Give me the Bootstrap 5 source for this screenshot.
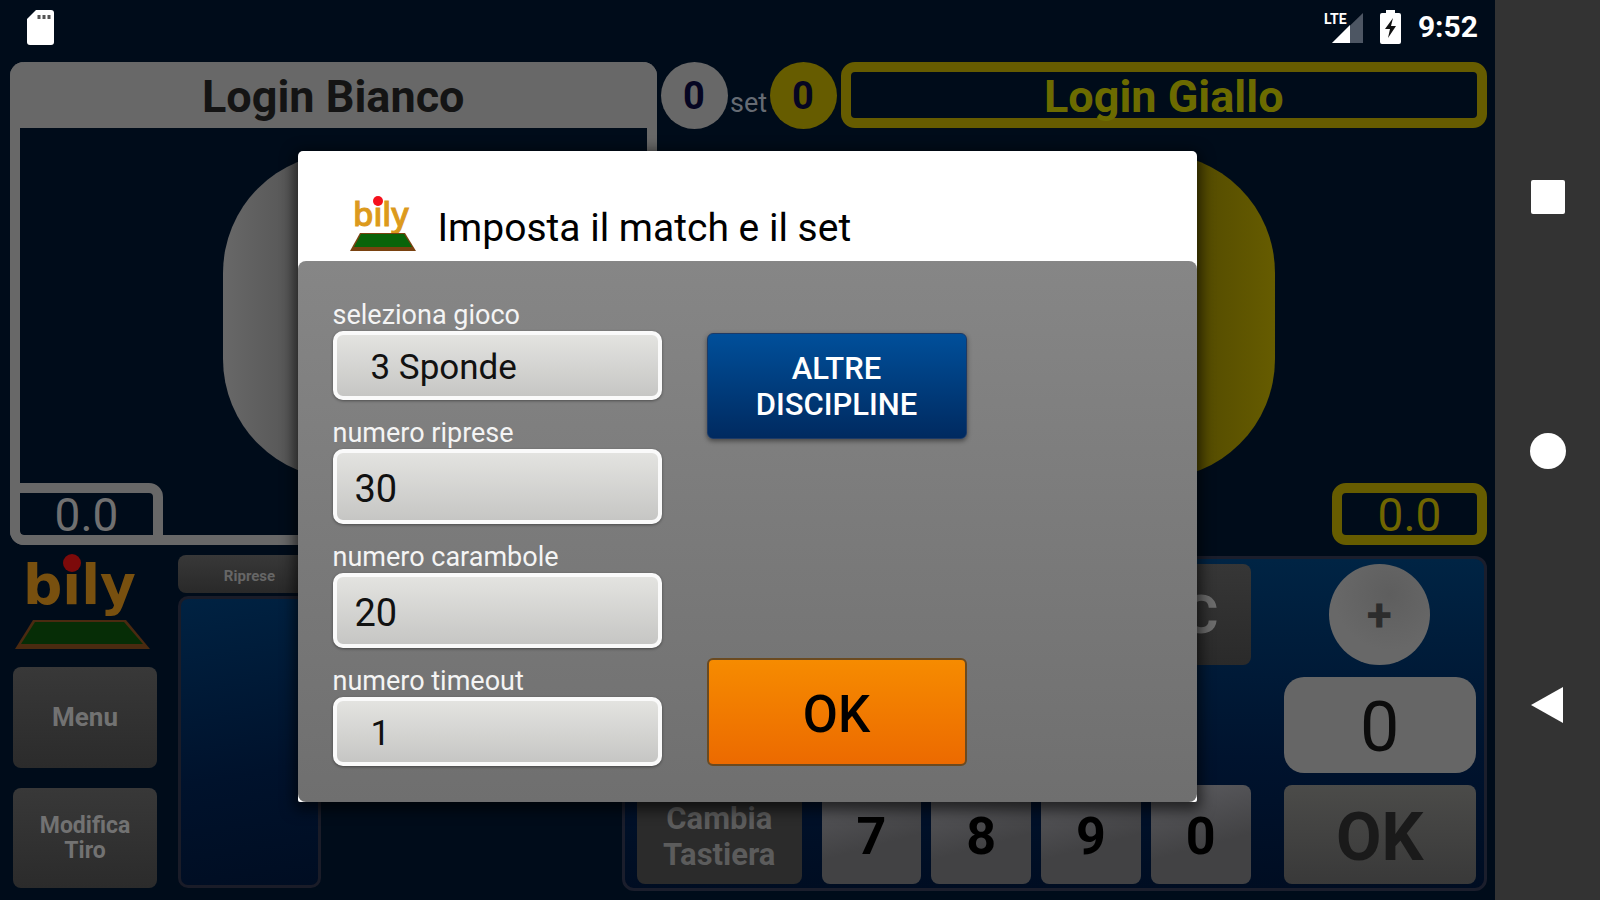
<!DOCTYPE html>
<html lang="it">
<head>
<meta charset="utf-8">
<meta name="viewport" content="width=device-width, initial-scale=1">
<title>Bily</title>
<link href="https://cdn.jsdelivr.net/npm/bootstrap@5.3.0/dist/css/bootstrap.min.css" rel="stylesheet">
<style>
  :root { --ash: #686868; --gold: #665c00; --night: #000c1a; }
  body { font-family: Roboto, "Liberation Sans", sans-serif; background: var(--night); color: #000; line-height: 1.2; }
  .sysnav { width: 105px; background: #333; }
  .sysnav button { background: none; border: 0; padding: 0; }
  .keys { gap: 217px; padding-top: 2px; }
  .statusbar { height: 62px; padding: 0 17px 8px 26px; }
  .clock { font-size: 30px; font-weight: 700; color: #fff; }

  .scores { flex: 482 1 0; display: grid; grid-template-columns: minmax(0, 1fr) 176px minmax(0, 1fr); column-gap: 4px; padding: 0 8px 0 10px; }
  .side-white { border: 10px solid var(--ash); border-width: 0 10px 10px; border-radius: 14px; }
  .login { height: 66px; font-size: 45px; font-weight: 700; padding: 3px 0 0; line-height: 1; }
  .login-white { margin: 0 -10px; border: 0; background: var(--ash); color: #141414; border-radius: 14px 14px 0 0; }
  .login-gold { background: transparent; color: #6c6b00; border: 10px solid var(--gold); border-radius: 14px; }
  .stage { min-height: 0; }
  .blob { width: 300px; height: 326px; margin-top: 25px; border-radius: 120px; }
  .blob-white { margin-left: 203px; background: linear-gradient(90deg, #686868, #4a4a4a 40%); }
  .blob-gold { margin-right: 212px; background: linear-gradient(270deg, #665c00, #4a4200 40%); }
  .avg { height: 62px; padding-top: 2px; font-size: 46px; line-height: 1; border-radius: 14px; }
  .avg-white { width: 153px; margin: 0 0 -10px -10px; border: 10px solid var(--ash); border-radius: 0 14px 0 14px; color: #707070; }
  .avg-gold { width: 155px; border: 10px solid var(--gold); color: #706600; }
  .setbar { height: 67px; }
  .disc { width: 67px; height: 67px; padding-top: 2px; font-size: 38px; font-weight: 700; color: #050522; }
  .disc-ash { background: var(--ash); }
  .disc-gold { background: var(--gold); }
  .set-word { font-size: 27px; color: #666b73; padding-top: 16px; }

  .lower { flex: 357 1 0; display: grid; grid-template-columns: 144px 164px 301fr 865fr; padding: 0 8px 9px 13px; }
  .tools { gap: 20px; padding: 9px 0 3px; }
  .tool { flex: 1 1 0; border: 0; border-radius: 8px; background: linear-gradient(#383838, #2b2b2b); color: #727272; font-weight: 700; }
  .tool-a { font-size: 26px; }
  .tool-b { font-size: 23px; line-height: 25px; }
  .rounds { margin-left: 21px; padding: 10px 0 3px; gap: 3px; }
  .rounds-head { height: 38px; padding-top: 4px; border-radius: 8px; background: linear-gradient(#383838, #292929); color: #666; font-size: 15px; font-weight: 700; }
  .rounds-body { border: 3px solid #1a1c28; border-radius: 10px; background: linear-gradient(170deg, #002242, #00122c 60%, #000d22); }
  .pad { grid-column: 4; margin-top: 11px; border: 3px solid #1b1e2c; border-radius: 12px; padding: 5px 8px 4px 12px;
         background: linear-gradient(#002444, #00132e 60%, #000d22);
         display: grid; gap: 12px 10px; grid-template-rows: 100fr 95fr 98fr; grid-template-columns: 175fr 100fr 100fr 100fr 100fr 216fr; }
  .pad button { border: 0; padding: 0; border-radius: 8px; font-weight: 700; line-height: 1; }
  .pad .key { padding-top: 4px; background: linear-gradient(165deg, #5c5c60, #424244 60%); font-size: 52px; color: #000; }
  .pad .key-c { grid-column: 5; background: linear-gradient(#363636, #2a2a2a); color: #6c6c6c; font-size: 54px; }
  .pad .key-swap { margin-right: 10px; padding-top: 4px; background: #2b2b2b; color: #5c5c5c; font-size: 31px; line-height: 36px; }
  .pad .key-plus { grid-column: 6; justify-self: center; margin-left: 22px; height: 100%; aspect-ratio: 1; border-radius: 50%; background: radial-gradient(circle at 60% 30%, #5e5e5e, #686868 60%); color: #2c2c2c; font-size: 46px; }
  .counter { grid-column: 6; margin-left: 23px; background: #666; border-radius: 20px; font-size: 70px; line-height: 1; color: #0c0c0c; padding-top: 4px; }
  .pad .key-ok { grid-column: 6; margin-left: 23px; padding-top: 6px; background: linear-gradient(#4b4b49, #393939); color: #1a1a1a; font-size: 66px; }

  .veil { inset: 0; padding-top: 52px; }
  .dialog { width: 60.2%; min-width: 700px; background: #fff; border-radius: 5px 5px 2px 2px; box-shadow: 0 4px 14px 4px #0009; }
  .dialog-top { height: 110px; padding: 0 52px 10px; gap: 22px; }
  .dialog-top svg { overflow: visible; }
  .dialog-top h1 { font-size: 39px; font-weight: 400; line-height: 46px; margin: 0; }
  .dialog form { border-radius: 8px; background: linear-gradient(#868686, #6f6f6f); padding: 37px 35px 36px; gap: 45px; }
  .fields { flex: 0 0 329px; gap: 16px; }
  .fields label { display: block; padding-top: 2px; color: #f4f4f4; font-size: 27px; line-height: 31px; }
  .box { display: block; width: 100%; border: 4px solid #fafafa; border-radius: 10px; background: linear-gradient(#e3e3e0, #c6c6c4); color: #111; box-shadow: 0 1px 3px #0006; appearance: none; outline: 0; }
  input.box { height: 75px; font-size: 38px; padding: 6px 18px 0; }
  select.box { height: 69px; font-size: 35px; padding: 6px 34px 0; }
  .actions { flex: 0 0 260px; padding-top: 35px; }
  .actions button { border-radius: 6px; font-weight: 500; }
  .act-blue { height: 106px; padding-top: 4px; color: #fff; font-size: 31px; line-height: 36px; background: linear-gradient(#004f9a, #002a60); border: 1px solid #1d3a66; box-shadow: 0 2px 5px #0007; }
  .act-orange { height: 108px; padding-top: 6px; font-size: 51px; line-height: 1; background: linear-gradient(#f68b00, #ec6a00); border: 2px solid #6b4a20; }
</style>
</head>
<body>
<div class="d-flex min-vh-100">
  <main class="position-relative flex-grow-1 d-flex flex-column">
    <header class="statusbar d-flex align-items-center">
      <svg width="28" height="35" viewBox="0 0 28 35"><path d="M10 0H25Q28 0 28 3V32Q28 35 25 35H4Q1 35 1 32V9Z" fill="#fff"/><path d="M13 5v4M18 5v4M23 5v4" stroke="#555" stroke-width="3"/></svg>
      <div class="ms-auto d-flex align-items-center">
        <svg width="40" height="34" viewBox="0 0 40 34"><path d="M39 3V33H8Z" fill="#4d5663"/><path d="M26 15V33H8Z" fill="#fff"/><text x="0" y="14" font-family="Roboto" font-size="14" font-weight="700" fill="#fff">LTE</text></svg>
        <svg class="mx-3" width="22" height="34" viewBox="0 0 22 34"><path d="M6 3V0H15V3H19Q21 3 21 5V32Q21 34 19 34H2Q0 34 0 32V5Q0 3 2 3Z" fill="#fff"/><path d="M13 8L5 19H10L8 28L16 16H11Z" fill="#111"/></svg>
        <span class="clock">9:52</span>
      </div>
    </header>

    <section class="scores">
      <div class="side-white d-flex flex-column">
        <button class="login login-white">Login Bianco</button>
        <div class="stage flex-grow-1"><div class="blob blob-white d-inline-block"></div></div>
        <div class="avg avg-white d-flex justify-content-center align-items-center">0.0</div>
      </div>
      <div class="setbar d-flex justify-content-between">
        <div class="disc disc-ash rounded-circle d-flex justify-content-center align-items-center">0</div>
        <span class="set-word align-self-center">set</span>
        <div class="disc disc-gold rounded-circle d-flex justify-content-center align-items-center">0</div>
      </div>
      <div class="d-flex flex-column align-items-end">
        <button class="login login-gold w-100 d-flex justify-content-center align-items-center">Login Giallo</button>
        <div class="stage flex-grow-1"><div class="blob blob-gold d-inline-block"></div></div>
        <div class="avg avg-gold d-flex justify-content-center align-items-center">0.0</div>
      </div>
    </section>

    <section class="lower">
      <div class="d-flex flex-column">
        <svg width="140" height="113" viewBox="0 0 140 113" aria-label="bily">
          <text x="10" y="59" font-family="DejaVu Sans" font-weight="700" font-size="55" fill="#78500f">bily</text>
          <circle cx="59" cy="18" r="9" fill="#7d0a0a"/>
          <path d="M20 75H113L137 104H2Z" fill="#4a2a10"/><path d="M22 77H111L130 99H8Z" fill="#062d06"/>
        </svg>
        <div class="tools flex-grow-1 d-flex flex-column">
          <button class="tool tool-a">Menu</button>
          <button class="tool tool-b">Modifica<br>Tiro</button>
        </div>
      </div>
      <div class="rounds d-flex flex-column">
        <div class="rounds-head d-flex justify-content-center align-items-center">Riprese</div>
        <div class="rounds-body flex-grow-1"></div>
      </div>
      <div class="pad">
        <button class="key-c">C</button>
        <button class="key-plus">+</button>
        <div class="counter d-flex justify-content-center align-items-center">0</div>
        <button class="key-swap">Cambia<br>Tastiera</button>
        <button class="key">7</button>
        <button class="key">8</button>
        <button class="key">9</button>
        <button class="key">0</button>
        <button class="key-ok">OK</button>
      </div>
    </section>

    <div class="veil position-absolute d-flex justify-content-center align-items-center">
      <div class="dialog" role="dialog" aria-labelledby="dlg-title">
        <div class="dialog-top d-flex align-items-end">
          <svg width="66" height="56" viewBox="0 0 66 56" aria-label="bily">
            <text x="3" y="31" font-family="Noto Sans" font-weight="500" font-size="33" fill="#dc9a1c" stroke="#dc9a1c">bily</text>
            <circle cx="28" cy="6" r="5" fill="#f5101c"/>
            <path d="M10 38H55L66 56H0Z" fill="#7a4210"/><path d="M11 39H54L62 52H4Z" fill="#0a640a"/>
          </svg>
          <h1 id="dlg-title">Imposta il match e il set</h1>
        </div>
        <form class="d-flex">
          <div class="fields d-flex flex-column">
            <div><label for="gioco">seleziona gioco</label><select class="box" id="gioco"><option>3 Sponde</option></select></div>
            <div><label for="riprese">numero riprese</label><input class="box" id="riprese" value="30"></div>
            <div><label for="carambole">numero carambole</label><input class="box" id="carambole" value="20"></div>
            <div><label for="timeout">numero timeout</label><select class="box" id="timeout"><option>1</option></select></div>
          </div>
          <div class="actions d-flex flex-column justify-content-between">
            <button type="button" class="act-blue">ALTRE<br>DISCIPLINE</button>
            <button type="button" class="act-orange">OK</button>
          </div>
        </form>
      </div>
    </div>
  </main>

  <nav class="sysnav d-flex justify-content-center">
    <div class="keys d-flex flex-column align-items-center justify-content-center">
      <button aria-label="Recenti"><svg class="d-block" width="36" height="36"><rect x="1" y="1" width="34" height="34" rx="2" fill="#fff"/></svg></button>
      <button aria-label="Home"><svg class="d-block" width="38" height="38"><circle cx="19" cy="19" r="18" fill="#fff"/></svg></button>
      <button aria-label="Indietro"><svg class="d-block" width="36" height="36"><path d="M1 18L33 0V36Z" fill="#fff"/></svg></button>
    </div>
  </nav>
</div>
<script src="https://cdn.jsdelivr.net/npm/bootstrap@5.3.0/dist/js/bootstrap.bundle.min.js"></script>
</body>
</html>
